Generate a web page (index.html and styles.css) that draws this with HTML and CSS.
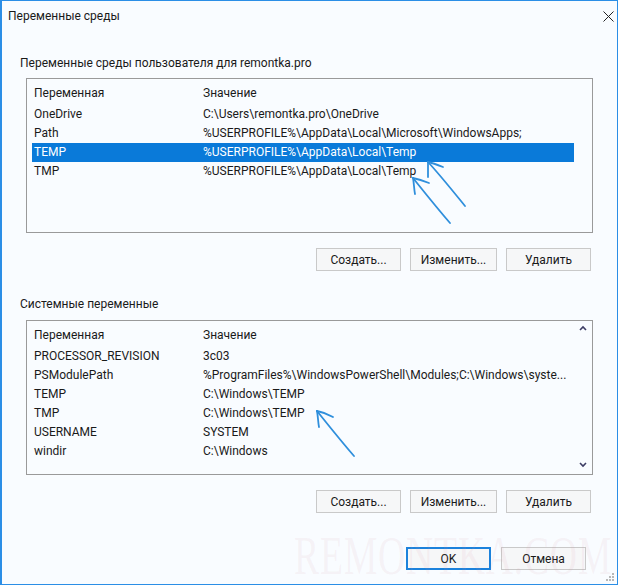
FILE: index.html
```html
<!DOCTYPE html>
<html lang="ru">
<head>
  <meta charset="UTF-8">
  <meta name="viewport" content="width=device-width, initial-scale=1.0">
  <link rel="stylesheet" href="styles.css">
  <title>Переменные среды</title>
</head>
<body>
  <div class="window">
    <div class="titlebar">
      <span class="title">Переменные среды</span>
      <svg class="close" width="11" height="11" viewBox="0 0 11 11">
        <path d="M0.5 0.5 L10.5 10.5 M10.5 0.5 L0.5 10.5" stroke="#222" stroke-width="1" fill="none"/>
      </svg>
    </div>

    <div class="content">
      <div class="group-label">Переменные среды пользователя для remontka.pro</div>
      <div class="list">
        <div class="rows">
          <div class="row head"><span>Переменная</span><span>Значение</span></div>
          <div class="row"><span>OneDrive</span><span>C:\Users\remontka.pro\OneDrive</span></div>
          <div class="row"><span>Path</span><span>%USERPROFILE%\AppData\Local\Microsoft\WindowsApps;</span></div>
          <div class="row selected"><span>TEMP</span><span>%USERPROFILE%\AppData\Local\Temp</span></div>
          <div class="row"><span>TMP</span><span>%USERPROFILE%\AppData\Local\Temp</span></div>
        </div>
      </div>
      <div class="buttons">
        <button type="button">Создать...</button>
        <button type="button" class="wide">Изменить...</button>
        <button type="button">Удалить</button>
      </div>

      <div class="group-label second">Системные переменные</div>
      <div class="list scrolled">
        <div class="rows">
          <div class="row head"><span>Переменная</span><span>Значение</span></div>
          <div class="row"><span>PROCESSOR_REVISION</span><span>3c03</span></div>
          <div class="row"><span>PSModulePath</span><span>%ProgramFiles%\WindowsPowerShell\Modules;C:\Windows\syste...</span></div>
          <div class="row"><span>TEMP</span><span>C:\Windows\TEMP</span></div>
          <div class="row"><span>TMP</span><span>C:\Windows\TEMP</span></div>
          <div class="row"><span>USERNAME</span><span>SYSTEM</span></div>
          <div class="row"><span>windir</span><span>C:\Windows</span></div>
        </div>
        <div class="scrollbar">
          <svg width="8" height="6" viewBox="0 0 8 6"><path d="M1 5 L4 2 L7 5" stroke="#3c3c64" stroke-width="1.6" fill="none"/></svg>
          <svg width="8" height="6" viewBox="0 0 8 6"><path d="M1 1 L4 4 L7 1" stroke="#3c3c64" stroke-width="1.6" fill="none"/></svg>
        </div>
      </div>
      <div class="buttons">
        <button type="button">Создать...</button>
        <button type="button" class="wide">Изменить...</button>
        <button type="button">Удалить</button>
      </div>

      <div class="buttons dialog">
        <button type="button" class="default">OK</button>
        <button type="button">Отмена</button>
      </div>
    </div>

    <div class="watermark">REMONTKA.COM</div>

    <!-- hand drawn pointers -->
    <svg class="marks" width="618" height="585" viewBox="0 0 618 585">
      <g stroke="#2f8fdc" stroke-width="1.8" fill="none" stroke-linecap="round" stroke-linejoin="round">
        <path d="M465 206 C452 190 440 175 428 162"/>
        <path d="M428 162 C433 163 438 165 443 167"/>
        <path d="M428 162 C428 167 428 172 428 177"/>
        <path d="M450 223 C437 208 425 193 413 178"/>
        <path d="M413 178 C418 179 424 181 429 183"/>
        <path d="M413 178 C414 183 414 189 415 194"/>
        <path d="M354 456 C341 441 329 426 317 411"/>
        <path d="M317 411 C322 412 328 414 333 417"/>
        <path d="M317 411 C318 416 318 422 319 427"/>
      </g>
    </svg>

    <div class="grip">
      <svg width="8" height="8" viewBox="0 0 8 8" fill="#b8b8b8">
        <rect x="6" y="0" width="2" height="2"/>
        <rect x="3" y="3" width="2" height="2"/>
        <rect x="6" y="3" width="2" height="2"/>
        <rect x="0" y="6" width="2" height="2"/>
        <rect x="3" y="6" width="2" height="2"/>
        <rect x="6" y="6" width="2" height="2"/>
      </svg>
    </div>
  </div>
</body>
</html>
```

FILE: styles.css
```css
body {
  margin: 0;
  font-family: Roboto, "Noto Sans", sans-serif;
  font-size: 12px;
  color: #1a1a1a;
  background: #f9fcff;
}

.window {
  position: relative;
  width: 618px;
  height: 585px;
  box-sizing: border-box;
  border: 1px solid #2b8ee6;
  border-left-width: 2px;
  background: #f9fcff;
  overflow: hidden;
}

.titlebar {
  height: 30px;
  display: flex;
  align-items: center;
  justify-content: space-between;
  padding: 0 3px 0 6px;
}

.title {
  font-size: 12px;
}

.close {
  display: block;
  margin-top: 1px;
}

.content {
  padding: 0 24px 0 18px;
}

.group-label {
  margin-top: 24px;
  line-height: 16px;
  height: 16px;
}

.group-label.second {
  margin-top: 25px;
}

.list {
  margin: 7px 0 0 6px;
  height: 155px;
  box-sizing: border-box;
  border: 1px solid #9a9a9a;
  background: #f9fcff;
  padding: 6px 18px 0 5px;
  display: flex;
}

.list.scrolled {
  margin-top: 8px;
  padding-right: 0;
}

.rows {
  flex: 1;
}

.row {
  display: grid;
  grid-template-columns: 169px 1fr;
  height: 19px;
  line-height: 19px;
  padding-left: 2px;
  white-space: nowrap;
}

.row.head {
  height: 20px;
  line-height: 17px;
}

.row.selected {
  background: #0a7ad9;
  color: #fff;
}

.scrollbar {
  width: 18px;
  display: flex;
  flex-direction: column;
  justify-content: space-between;
  align-items: center;
  padding: 2px 0 6px;
  margin-top: -4px;
}

.scrollbar svg {
  display: block;
}

.buttons {
  display: flex;
  justify-content: flex-end;
  gap: 9px;
  margin-top: 15px;
  padding-right: 2px;
}

button {
  width: 85px;
  height: 23px;
  padding: 0;
  font-family: inherit;
  font-size: 12px;
  color: #1a1a1a;
  background: #f6f7f8;
  border: 1px solid #c9c9c9;
}

button.wide {
  width: 87px;
}

.buttons.dialog {
  margin-top: 34px;
  padding-right: 7px;
  gap: 10px;
}

button.default {
  border: 2px solid #1c82dc;
}

.watermark {
  position: absolute;
  left: 292px;
  top: 524px;
  font-family: "Liberation Serif", serif;
  font-size: 54px;
  letter-spacing: 1px;
  color: rgba(214, 150, 165, 0.1);
  transform: scaleX(0.7);
  transform-origin: left top;
  pointer-events: none;
  white-space: nowrap;
}

.marks {
  position: absolute;
  left: -2px;
  top: -1px;
  pointer-events: none;
}

.grip {
  position: absolute;
  right: 3px;
  bottom: 3px;
  line-height: 0;
}
```
